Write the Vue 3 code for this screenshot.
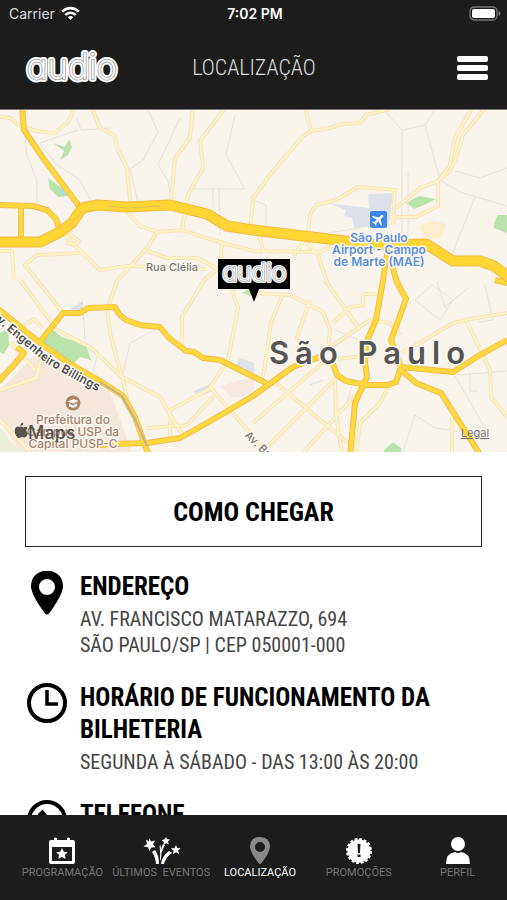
<template>
  <div class="app">
    <header class="top">
      <div class="status">
        <div class="carrier">
          <span>Carrier</span>
          <svg width="19" height="15" viewBox="0 0 19 15" fill="none" stroke="#fff" stroke-width="2.6" aria-hidden="true">
            <path d="M1.2 5.6C6 .9 13 .9 17.800 5.600" />
            <path d="M4.300 8.900C7.300 6 11.700 6 14.700 8.900" />
            <path d="M9.500 14 6.700 11.200Q9.500 9 12.300 11.200Z" fill="#fff" stroke="none" />
          </svg>
        </div>
        <strong>7:02 PM</strong>
        <div class="battery">
          <svg width="32" height="16" viewBox="0 0 32 16" aria-hidden="true">
            <rect x="1" y="1" width="27" height="13" rx="4" fill="none" stroke="#777" stroke-width="1.3" />
            <rect x="3" y="3" width="23" height="9" rx="2" fill="#fff" />
            <path d="M29.500 5v5q2-1 2-2.500t-2-2.500" fill="#777" />
          </svg>
        </div>
      </div>
      <div class="nav">
        <a href="#" class="brand" aria-label="audio">
          <svg width="104" height="36" viewBox="0 0 104 36">
            <defs>
              <text id="wordmark" x="52" y="29" text-anchor="middle" class="wordmark">audio</text>
              <g id="logo">
                <use href="#wordmark" fill="#fff" stroke="#fff" stroke-width="6" />
                <use href="#wordmark" fill="#9a9a9a" stroke="#9a9a9a" stroke-width="2" />
                <use href="#wordmark" fill="#fff" stroke="#fff" stroke-width=".3" />
              </g>
            </defs>
            <use href="#logo" />
          </svg>
        </a>
        <h1>LOCALIZAÇÃO</h1>
        <button class="menu" type="button" aria-label="Menu">
          <span></span>
          <span></span>
          <span></span>
        </button>
      </div>
    </header>

    <main class="content">
      <svg class="map" viewBox="0 110 507 342" preserveAspectRatio="xMidYMid slice">
        <rect y="110" width="507" height="342" fill="#f9f5ed" />
        <path d="M0 390 40 350 110 392 132 452H20L0 420Z" fill="#f4e8dc" />
        <path d="M0 427 20 452H0Z" fill="#e9edda" />
        <g fill="#b9e3ab">
          <path d="M53 143 65 147 69 139 72 147 68 155 60 160 64 151Z" />
          <path d="M48 178 61 187 68 196 58 197 50 189Z" />
          <path d="M42 338 53 330 62 337 86 345 91 360 80 357 73 364 43 347Z" />
          <path d="M0 333 8 329 9 345 4 354 0 352Z" />
          <path d="M406 203 419 196 436 199 424 205 414 209Z" />
          <path d="M494 223 498 215H507V233L494 228Z" />
          <path d="M384 450 393 442 401 448V452H384Z" />
          <path d="M242 293 251 288V296Z" />
        </g>
        <path d="M60 188 67 192 66 196 61 194Z" fill="#a5dcef" />
        <g fill="#dde2ea">
          <path d="M328 203 369 208 368 194 393 193 389 225 354 228 352 218 344 216 346 210Z" />
          <path d="M70 309 83 301V312Z" />
          <path d="M235 367 240 358 254 363V374Z" />
          <path d="M194 391 210 384 216 390 197 397Z" />
        </g>
        <path d="M419 226 432 221 446 224 441 238 425 239Z" fill="#fceecb" />
        <path d="M220 386 254 377V395L232 398Z" fill="#f7e9e1" />

        <g class="lanes">
          <path v-for="d in lanes" :key="d" :d="d" />
        </g>
        <g class="streets-edge">
          <path v-for="d in streets" :key="d" :d="d" />
        </g>
        <g class="streets">
          <path v-for="d in streets" :key="d" :d="d" />
        </g>
        <g class="avenues-edge">
          <path v-for="d in avenues" :key="d" :d="d" />
        </g>
        <g class="avenues">
          <path v-for="d in avenues" :key="d" :d="d" />
        </g>
        <g class="highways-edge">
          <path v-for="d in highways" :key="d" :d="d" />
        </g>
        <g class="highways">
          <path v-for="d in highways" :key="d" :d="d" />
        </g>
        <path d="M100 382 122 396 134 417 147 446" fill="none" stroke="#b9b49a" stroke-width="2" />
        <path d="M66 228 78 217 82 211M108 206 127 208 160 206" fill="none" stroke="#e6bd58" stroke-width="1" />

        <g class="label">
          <text x="172" y="271" class="street">Rua Clélia</text>
          <text class="street bold">
            <textPath href="#billings">Av. Engenheiro Billings</textPath>
          </text>
          <text class="street">
            <textPath href="#brigadeiro">Av. Brig.</textPath>
          </text>
          <g class="airport">
            <text x="379" y="242">São Paulo</text>
            <text x="379" y="254">Airport - Campo</text>
            <text x="379" y="266">de Marte (MAE)</text>
          </g>
          <text x="370" y="364" class="city">São Paulo</text>
          <g class="campus">
            <text x="73" y="424">Prefeitura do</text>
            <text x="73" y="436">Campus USP da</text>
            <text x="73" y="448">Capital PUSP-C</text>
          </g>
        </g>
        <path id="billings" d="M-10 316 46 363Q68 376 110 398" fill="none" />
        <path id="brigadeiro" d="M244 436 284 474" fill="none" />

        <rect x="370" y="211" width="17" height="17" rx="2" fill="#3d86ec" />
        <path d="M378.500 213.500q1-.8 1.200.4v4l5.300 3.200v1.200l-5.300-1.500v3l1.500 1.200v1l-2.700-.7-2.700.7v-1l1.500-1.200v-3l-5.300 1.500v-1.200l5.300-3.200v-4z" fill="#fff" transform="rotate(45 378.500 219.500)" />
        <circle cx="73" cy="403" r="7.500" fill="#af8467" />
        <path d="M67.500 401.500 73.500 399 78.500 401 73 403.500ZM69 403.500 73 405.500 77 403.500V406L73 408 69 406Z" fill="#fff" />

        <g fill="#3c3c3a" opacity=".85">
          <path d="M23.500 427.500q-3-1.500-3.500-.5-4-1.500-5 2-1 4 2 8 1.500 1.500 3.500.5 2-.8 3.500 0 2 .3 3-2l1-2.500q-3-2-.500-5-1.500-2-4-.5M20.300 426q0-3 3-3.500.3 3-3 3.500" />
          <text x="28" y="439" class="maps">Maps</text>
        </g>
        <a href="#legal">
          <text x="475" y="437" class="legal">Legal</text>
        </a>

        <path d="M218 259H290V289H259L254 302 249 289H218Z" fill="#000" />
        <use href="#logo" transform="translate(218 261) scale(.7)" />
      </svg>

      <div class="details">
        <button class="directions" type="button">COMO CHEGAR</button>

        <section class="info">
          <svg class="info-icon" viewBox="0 0 40 44" aria-hidden="true">
            <path fill-rule="evenodd" d="M16 0H24Q36 3 36 16 35 25 22 42.500 20 44.500 18 42.500 5 25 4 16 4 3 16 0ZM20 8a8 8 0 1 0 0 16 8 8 0 1 0 0-16Z" />
          </svg>
          <div>
            <h2>ENDEREÇO</h2>
            <p>AV. FRANCISCO MATARAZZO, 694<br>SÃO PAULO/SP | CEP 050001-000</p>
          </div>
        </section>

        <section class="info">
          <svg class="info-icon line" viewBox="0 0 40 44" aria-hidden="true">
            <circle cx="20" cy="21" r="18" />
            <path d="M20 8V22H31" stroke-width="3.500" />
          </svg>
          <div>
            <h2>HORÁRIO DE FUNCIONAMENTO DA BILHETERIA</h2>
            <p>SEGUNDA À SÁBADO - DAS 13:00 ÀS 20:00</p>
          </div>
        </section>

        <section class="info">
          <svg class="info-icon line" viewBox="0 0 40 44" aria-hidden="true">
            <circle cx="20" cy="21" r="18" />
            <path d="M11 15 15.500 10.500 20 16 17 19Q20 24 24 26L27 23 32 28 29 31Q13 30 11 15Z" fill="#000" stroke="none" />
          </svg>
          <div>
            <h2>TELEFONE</h2>
          </div>
        </section>
      </div>
    </main>

    <nav class="tabs">
      <a href="#programacao" class="tab">
        <svg viewBox="0 0 40 28" aria-hidden="true">
          <path fill-rule="evenodd" d="M9 3H12V1Q13.500 0 15 1V3H25V1Q26.500 0 28 1V3H31Q33 3 33 5V25Q33 27 31 27H9Q7 27 7 25V5Q7 3 9 3ZM10 10V24H30V10Z" />
          <path d="m20 11 1.800 3.700 4 .5-2.900 2.800.8 4-3.700-2-3.700 2 .8-4-2.900-2.800 4-.5z" />
        </svg>
        <span>PROGRAMAÇÃO</span>
      </a>
      <a href="#eventos" class="tab">
        <svg viewBox="0 0 40 28" aria-hidden="true">
          <path d="m8 1 2 3.500 4-1-2 3.800 2.500 3-4.300.2L8.500 14 7 10.300 2.500 9.500 6 7 5 2.500 8 4.500z" />
          <path d="m25 0 1.200 2.300 2.800.2-2 2 .8 3-2.800-1.200L22.500 8l.3-3-2.100-2 2.900-.6z" />
          <path d="m35 8 1.300 3 3.400.3-2.600 2.300 1 3.400-3.100-1.700-3 2 .6-3.600-2.700-2.300 3.700-.5z" />
          <path d="M11 15 14 13Q18 18 18 27H15Q14.500 20 11 15ZM18.500 9 19.500 8 20.500 16 19.500 19ZM22 7 24 8Q20 14 20 22L19 24Q18.500 14 22 7ZM28 14 31 16Q24 21 23 27H20Q21 19 28 14Z" />
        </svg>
        <span>ÚLTIMOS&nbsp; EVENTOS</span>
      </a>
      <a href="#localizacao" class="tab active">
        <svg viewBox="0 0 40 28" aria-hidden="true">
          <path fill-rule="evenodd" d="M20 0Q30 0 30 10 29 17 21 26.500 20 27.500 19 26.500 11 17 10 10 10 0 20 0ZM20 5a5 5 0 1 0 0 10 5 5 0 1 0 0-10Z" />
        </svg>
        <span>LOCALIZAÇÃO</span>
      </a>
      <a href="#promocoes" class="tab">
        <svg viewBox="0 0 40 28" aria-hidden="true">
          <circle cx="20" cy="14" r="11.500" />
          <circle cx="20" cy="14" r="12" fill="none" stroke="#fff" stroke-width="2" stroke-dasharray="2.800 1.910" />
          <path d="M18.500 7H21.500L21 16H19ZM18.500 17.500H21.500V20H18.500Z" fill="#1c1c1c" />
        </svg>
        <span>PROMOÇÕES</span>
      </a>
      <a href="#perfil" class="tab">
        <svg viewBox="0 0 40 28" aria-hidden="true">
          <circle cx="20" cy="7" r="7" />
          <path d="M8 27Q8 16 17 15 20 17 23 15 32 16 32 27Z" />
        </svg>
        <span>PERFIL</span>
      </a>
    </nav>
  </div>
</template>

<script setup>
const highways = [
  'M-4 242H40L60 232 72 223 82 208 97 205 127 207 170 205 207 214 227 226 253 230 320 238 380 245 426 244 453 261 480 261 494 266 511 279'
]

const avenues = [
  'M22 106 24 130 43 158 79 206',
  'M-4 205 33 206 47 210 56 219 60 232',
  'M21 206V240',
  'M-4 307 40 343 67 362 100 381 123 396 135 417 149 456',
  'M39 343 55 323 63 313 80 313 88 308 115 307 119 314 126 320 140 325 160 327 168 337 186 351 194 352 203 358 220 360 254 377 266 383',
  'M90 446 112 444 147 443 180 438 207 423 253 396 293 367 322 356',
  'M-4 384 12 367 24 353 17 347',
  'M388 248 383 280 376 320 366 343 365 363 367 377 355 403 350 456',
  'M388 248 396 280 406 299 391 340 401 367 396 382 388 385H366L346 381 337 375 333 364',
  'M401 367 453 372 480 355 507 340',
  'M401 370 416 383 441 393 460 423 481 456',
  'M495 280 511 284'
]

const streets = [
  'M92 108 100 128 115 136 117 148 127 168 130 201 128 213 140 226 157 232 182 230 200 236 223 243 254 251 320 252 344 240',
  'M193 108 190 138 175 158 171 202',
  'M225 108 200 141 203 168 188 195 182 230',
  'M0 117 10 118 20 126 37 131 55 133 68 122 75 108',
  'M157 232 147 248 117 281 107 310 110 333 122 377 130 410',
  'M147 251 167 258 197 258 220 270',
  'M62 232 72 243 83 253 100 270 127 266 206 269',
  'M66 231 79 241 75 245 66 243',
  'M0 251H12L14 280',
  'M20 280 57 330 90 347 122 377 160 397 173 420 184 437',
  'M83 253 37 255 25 265 37 280 63 313',
  'M222 243 220 267 204 280 182 317V350',
  'M228 280 238 307 228 360 210 387 250 433 270 456',
  'M213 387 170 410V436',
  'M147 428 187 425 214 396',
  'M305 108 311 131 303 136 273 171 253 198 250 229',
  'M311 131 330 128 342 124 360 123 366 115 389 109',
  'M308 233 310 215 316 205 336 200 358 187 395 190 393 225',
  'M472 108 455 138 450 165 438 181 420 188 396 208',
  'M485 108 463 135 456 158 450 171 438 181V206L416 217H390',
  'M258 233 264 253M304 240 318 255 327 282',
  'M304 240 294 256',
  'M256 293 290 295 323 312 330 330 328 350',
  'M283 293 271 323 263 377',
  'M310 300 296 340',
  'M325 280 360 330',
  'M333 323 350 307 363 305V294H376',
  'M326 350 370 320 390 323 400 335',
  'M276 383 348 443',
  'M253 423 326 360 364 356',
  'M265 449 340 374',
  'M300 456 363 387',
  'M335 380 336 413 342 454',
  'M356 454 360 423 380 403 390 384',
  'M401 353 416 345 453 323 470 319 507 313',
  'M466 320 490 370 491 397 507 417',
  'M452 417V452',
  'M0 420 30 452M10 342 35 370M41 360 36 378 0 390M25 325 34 319 42 328'
]

const lanes = [
  'M24 130 27 155 37 181V203',
  'M77 118 81 130 109 128M78 130 40 143 56 164 80 180 90 199',
  'M148 110 158 132 143 160 130 169 138 202',
  'M180 118 158 165 168 181 170 193M193 189H245L226 155 235 115',
  'M213 190V207M219 190V211M220 212V235',
  'M382 108 402 130 425 125 436 108M402 130V250M408 171V240M425 125 440 180',
  'M440 180 460 192 507 206M455 171 480 178 507 168',
  'M475 197 450 260M253 200 266 205V230M315 235 360 228',
  'M83 312 85 340M97 357 91 380M160 327 130 343 122 377',
  'M415 300 440 320 453 300 432 285ZM437 282 445 307 468 288M485 285 493 320 478 322',
  'M401 367 460 375 507 371M470 372V391H478M453 372 483 425M403 452 415 415 435 428 480 434',
  'M333 410 345 408 354 380M310 385 323 380M335 330 370 345'
]
</script>

<style scoped>
.app {
  display: flex;
  flex-direction: column;
  height: 100vh;
  background: #fff;
  font-family: 'Roboto Condensed', Roboto, sans-serif;
}

/* Header */
.top {
  flex: none;
  background: #1c1c1c;
  color: #fff;
}

.status {
  display: grid;
  grid-template-columns: 1fr auto 1fr;
  align-items: center;
  height: 27px;
  padding: 0 6px 0 9px;
  font-family: Inter, sans-serif;
  font-size: 14px;
}

.status strong {
  font-weight: 600;
}

.carrier {
  display: flex;
  align-items: center;
  gap: 6px;
  color: #ddd;
}

.battery {
  display: flex;
  justify-content: flex-end;
}

.nav {
  display: grid;
  grid-template-columns: 1fr auto 1fr;
  align-items: center;
  height: 82px;
  padding: 0 19px 0 20px;
}

.brand svg {
  display: block;
}

.wordmark {
  font-family: Inter, sans-serif;
  font-size: 35px;
  font-weight: 200;
  font-feature-settings: 'cv11';
  stroke-linejoin: round;
}

h1 {
  margin: 0;
  color: #ddd;
  font-size: 22px;
  font-weight: 300;
  line-height: 28px;
}

.menu {
  display: flex;
  flex-direction: column;
  gap: 3px;
  justify-self: end;
  width: 31px;
  padding: 0;
  border: 0;
  background: none;
}

.menu span {
  height: 6px;
  border-radius: 2px;
  background: #fff;
}

/* Content */
.content {
  flex: 1;
  min-height: 0;
  overflow-y: auto;
  scrollbar-width: none;
}

.map {
  display: block;
  width: 100%;
  height: auto;
  border-top: 1px solid #777;
  box-sizing: border-box;
}

.map g {
  stroke-linejoin: round;
}

.lanes,
.streets,
.streets-edge,
.avenues,
.avenues-edge,
.highways,
.highways-edge {
  fill: none;
}

.lanes {
  stroke: #e5e3df;
  stroke-width: 1px;
}

.streets-edge {
  stroke: #f8e4b8;
  stroke-width: 4px;
}

.streets {
  stroke: #fff4ca;
  stroke-width: 2px;
}

.avenues-edge {
  stroke: #f4bd4b;
  stroke-width: 6px;
}

.avenues {
  stroke: #ffd83d;
  stroke-width: 4px;
}

.highways-edge {
  stroke: #f4b93f;
  stroke-width: 11px;
}

.highways {
  stroke: #ffd633;
  stroke-width: 9px;
}

.map text {
  font-family: Inter, sans-serif;
}

.label text {
  paint-order: stroke;
  stroke: #fbf8f2;
  stroke-width: 3px;
  text-anchor: middle;
}

.label .street {
  fill: #777;
  font-size: 11px;
  font-weight: 500;
}

.label .street:has(textPath) {
  text-anchor: start;
}

.label .bold {
  fill: #4b4b4b;
  font-size: 12px;
  font-weight: 600;
}

.airport {
  fill: #5b8fe0;
  font-size: 12px;
  font-weight: 600;
}

.campus {
  fill: #a8826d;
  font-size: 12px;
  font-weight: 500;
}

.label .city {
  fill: #555;
  font-size: 31px;
  font-weight: 600;
  letter-spacing: 6px;
}

.maps {
  font-size: 18px;
  font-weight: 500;
}

.legal {
  fill: #777;
  font-size: 11px;
  text-anchor: middle;
  text-decoration: underline;
}

.details {
  padding: 24px 25px;
}

.directions {
  display: block;
  width: 100%;
  height: 71px;
  margin-bottom: 24px;
  border: 1px solid #222;
  background: #fff;
  color: #000;
  font-family: inherit;
  font-size: 26px;
  font-weight: 700;
}

.info {
  display: flex;
  gap: 13px;
  margin-bottom: 24px;
  padding-left: 2px;
}

.info-icon {
  flex: none;
  width: 40px;
  height: 44px;
}

.line {
  fill: none;
  stroke: #000;
  stroke-width: 4px;
}

h2 {
  margin: 0;
  color: #000;
  font-size: 25px;
  font-weight: 700;
  line-height: 32px;
}

p {
  margin: 3px 0 0;
  color: #444;
  font-size: 20px;
  line-height: 26px;
}

/* Bottom tabs */
.tabs {
  display: flex;
  flex: none;
  height: 85px;
  padding-left: 13px;
  box-sizing: border-box;
  background: #1c1c1c;
}

.tab {
  display: flex;
  flex: 1 1 0;
  flex-direction: column;
  align-items: center;
  min-width: 0;
  padding-top: 22px;
  color: #777;
  font-family: Roboto, sans-serif;
  font-size: 11px;
  line-height: 15px;
  text-decoration: none;
}

.tab svg {
  width: 40px;
  height: 28px;
  fill: #fff;
}

.tab span {
  max-width: 100%;
  overflow: hidden;
  white-space: nowrap;
}

.active {
  color: #fff;
}

.active svg {
  fill: #888;
}
</style>

<style>
body {
  margin: 0;
}
</style>
